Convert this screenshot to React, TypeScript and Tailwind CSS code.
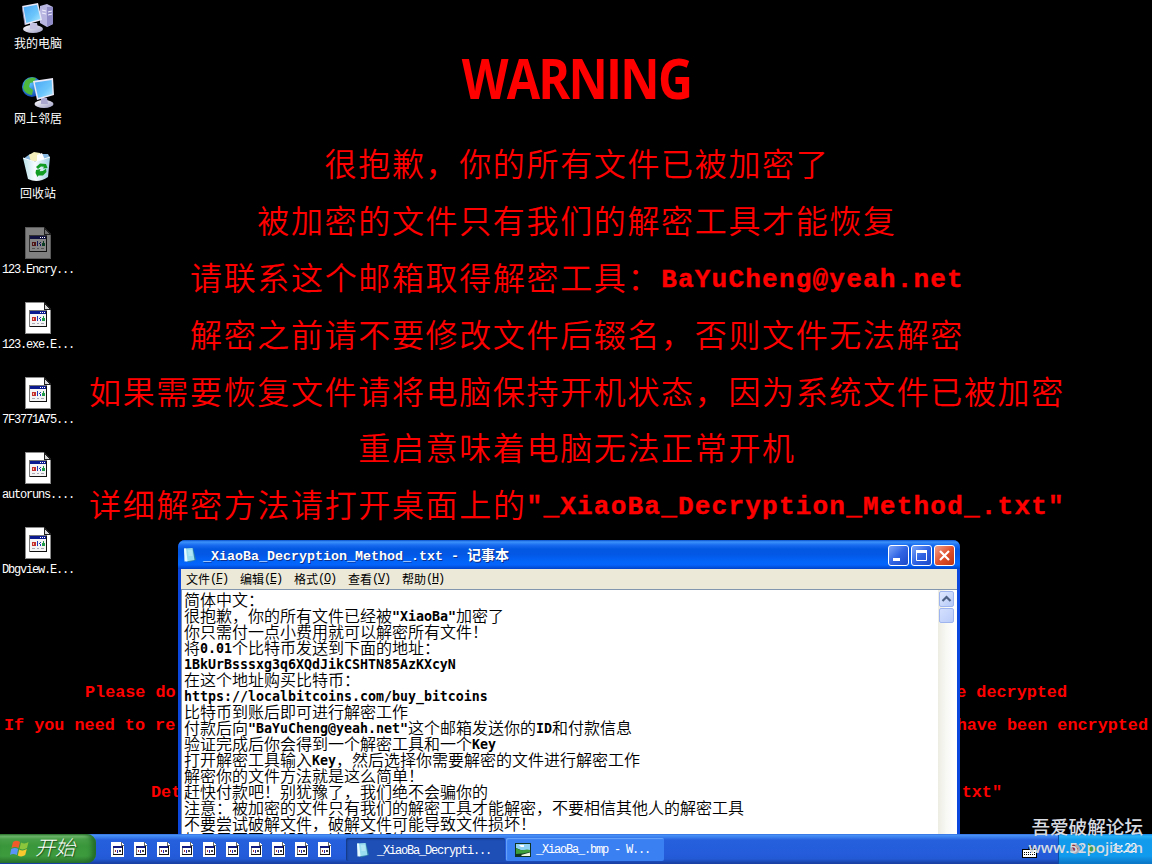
import React from "react";

const CJK = "font-['Noto_Sans_CJK_SC',sans-serif]";

function Mixed({ text, latin }: { text: string; latin: string }) {
  const parts = text.match(/[\x20-\x7e]+|[^\x20-\x7e]+/g) ?? [];
  return (
    <>
      {parts.map((p, i) =>
        /^[\x20-\x7e]/.test(p) ? (
          <span key={i} className={latin}>
            {p}
          </span>
        ) : (
          <span key={i}>{p}</span>
        )
      )}
    </>
  );
}

const SMALL = "font-['Liberation_Mono',monospace] text-[12px] tracking-[-1.2px]";

function Gradients() {
  return (
    <svg width="0" height="0" className="absolute">
      <defs>
        <linearGradient id="screen" x1="0" y1="0" x2="1" y2="1">
          <stop offset="0" stopColor="#4aa6f5" />
          <stop offset="0.6" stopColor="#6cc6fb" />
          <stop offset="1" stopColor="#b4ecff" />
        </linearGradient>
        <linearGradient id="metal" x1="0" y1="0" x2="1" y2="1">
          <stop offset="0" stopColor="#ffffff" />
          <stop offset="1" stopColor="#9c9cc4" />
        </linearGradient>
        <radialGradient id="globe" cx="0.4" cy="0.35" r="0.7">
          <stop offset="0" stopColor="#5cc4ff" />
          <stop offset="1" stopColor="#0a3fae" />
        </radialGradient>
        <linearGradient id="glass" x1="0" y1="0" x2="1" y2="0">
          <stop offset="0" stopColor="#b9e3ea" />
          <stop offset="0.45" stopColor="#f8fcff" />
          <stop offset="1" stopColor="#9fd0e4" />
        </linearGradient>
      </defs>
    </svg>
  );
}

function ComputerIcon() {
  return (
    <svg width="32" height="32" viewBox="0 0 32 32">
      <path d="M18 4 L25 2 L31 5 V22 L25 25 L18 21 Z" fill="#b9b6e2" />
      <path d="M25 5 L31 5 V22 L25 25 Z" fill="#8f8cc8" />
      <path d="M20 8 L24 9 M20 11 L24 12 M26 10 L30 9 M26 13 L30 12" stroke="#f3f2ff" strokeWidth="1" />
      <ellipse cx="11" cy="27" rx="10" ry="4" fill="url(#metal)" />
      <path d="M8 21 L15 21 L16 27 L8 27 Z" fill="#c3c1df" />
      <path d="M0 4 L16 1 L20 18 L3 23 Z" fill="#e9e9f8" />
      <path d="M1.500 5.300 L15 2.800 L18.500 17 L4.300 21 Z" fill="url(#screen)" />
      <path d="M0 4 L3 23" stroke="#8583a8" strokeWidth="0.8" />
    </svg>
  );
}

function NetworkIcon() {
  return (
    <svg width="32" height="32" viewBox="0 0 32 32">
      <circle cx="10" cy="10" r="10" fill="url(#globe)" />
      <path d="M3 4 Q8 -1 14 1 L12 5 L8 6 L7 10 L11 13 L10 18 Q3 17 1 11 Z" fill="#4db83c" />
      <path d="M15 3 L19 7 L17 11 L14 8 Z" fill="#7dd35c" />
      <ellipse cx="22" cy="27" rx="9.500" ry="4" fill="url(#metal)" />
      <path d="M19 21 L25 21 L26 27 L19 27 Z" fill="#aaa8ce" />
      <path d="M11 4 L31 1 L32 18 L15 23 Z" fill="#e9e9f8" />
      <path d="M12.800 5.500 L29.600 3 L30.500 17 L16.200 21 Z" fill="url(#screen)" />
    </svg>
  );
}

function RecycleIcon() {
  return (
    <svg width="32" height="32" viewBox="0 0 32 32">
      <path d="M1 7 L8 2 L26 2 L28 6 L15 10 Z" fill="#88b8e0" />
      <path d="M7 3 L12 0 L18 1 L21 8 L9 10 Z" fill="#f4efbb" />
      <path d="M15 3 L20 1 L23 8 L15 10 Z" fill="#fff" />
      <path d="M1 6 L13 10 L28 5 L26 25 Q16 32 6 27 Z" fill="url(#glass)" />
      <path d="M14 15 L18 11.500 L24 12 L25.500 16 L21 16.500 L22 14.800 L19 14.600 L16 17 Z" fill="#119c24" />
      <path d="M14 18 L18.500 17 L17.700 19.300 L20.800 19 L24 16.800 L24.500 20 L21 23.500 L16.500 23.500 L15.500 25 L13.500 21 Z" fill="#119c24" />
      <path d="M1 6 L13 10 L28 5" stroke="#f4fbff" strokeWidth="1" fill="none" />
    </svg>
  );
}

function ExeIcon({ dim = false }: { dim?: boolean }) {
  const paper = dim ? "#808080" : "#ffffff";
  return (
    <svg width="26" height="32" viewBox="0 0 26 32" shapeRendering="crispEdges">
      <path d="M0.5 0.5 H19 L25.5 7 V31.5 H0.5 Z" fill={paper} stroke={dim ? "#5a5a5a" : "#8a8a8a"} />
      <path d="M19 0.5 V7 H25.5 Z" fill={dim ? "#6b6b6b" : "#d6d6d6"} stroke="#202020" />
      <rect x="4.5" y="8.5" width="17" height="16" fill={dim ? "#868686" : "#f4f4f4"} stroke={dim ? "#333" : "#777"} />
      <rect x="5" y="9" width="16" height="3" fill={dim ? "#101040" : "#0b1b8f"} />
      <path d="M15 10.5h1M17 10.5h1M19 10.5h1" stroke="#fff" />
      <path d="M21.5 9 V24.5 H5" stroke="#111" fill="none" />
      <rect x="7" y="15" width="4" height="4" fill={dim ? "#501515" : "#c43030"} />
      <rect x="8" y="16" width="1" height="2" fill={dim ? "#868686" : "#f6c9a0"} />
      <path d="M12.500 14v5M14 16.500h1M15.500 15v1M15.500 17v2" stroke={dim ? "#15155a" : "#2436b8"} strokeWidth="1.500" fill="none" />
      <path d="M17 19v-3h1v-2h1v2h1v3z" fill={dim ? "#0b3c24" : "#1e9a4b"} />
      <path d="M7 21.500h3M12 21.500h2M16 21.500h3" stroke={dim ? "#555" : "#a9a9b5"} />
    </svg>
  );
}

function SmallExeIcon() {
  return (
    <svg width="13" height="15" viewBox="0 0 13 15" shapeRendering="crispEdges">
      <path d="M0 0 H10 L13 3 V15 H0 Z" fill="#fff" />
      <path d="M10 0 V3 H13" stroke="#666" fill="none" />
      <rect x="2.500" y="4.500" width="9" height="8" fill="#fff" stroke="#777" />
      <rect x="2" y="4" width="9" height="2" fill="#101a80" />
      <rect x="11" y="4" width="1" height="9" fill="#111" />
      <rect x="2" y="12" width="10" height="1" fill="#111" />
      <rect x="4" y="8" width="1" height="2" fill="#a33" />
      <rect x="6" y="8" width="1" height="3" fill="#22a" />
      <rect x="8" y="8" width="2" height="2" fill="#444" />
    </svg>
  );
}

function NoteIcon({ className }: { className?: string }) {
  return (
    <svg width="16" height="16" viewBox="0 0 16 16" className={className}>
      <path d="M3 2 L11 1 L14 13 L6 15.500 Z" fill="#2f7fa8" />
      <path d="M2 1.500 L10.500 1 L12.500 13 L4 14.500 Z" fill="#9adcf0" />
      <path d="M2 1.500 L4 1.400 L5.500 14.300 L2.500 14.500 Z" fill="#e6fbff" />
      <path d="M6 4h4M6.300 6h4M6.500 8h4" stroke="#c9f1fb" />
    </svg>
  );
}

const desktopIcons = [
  { label: "我的电脑", icon: <ComputerIcon /> },
  { label: "网上邻居", icon: <NetworkIcon /> },
  { label: "回收站", icon: <RecycleIcon /> },
  { label: "123.Encry...", icon: <ExeIcon dim /> },
  { label: "123.exe.E...", icon: <ExeIcon /> },
  { label: "7F3771A75...", icon: <ExeIcon /> },
  { label: "autoruns....", icon: <ExeIcon /> },
  { label: "Dbgview.E...", icon: <ExeIcon /> },
];

const messages = [
  "很抱歉，你的所有文件已被加密了",
  "被加密的文件只有我们的解密工具才能恢复",
  "请联系这个邮箱取得解密工具：BaYuCheng@yeah.net",
  "解密之前请不要修改文件后辍名，否则文件无法解密",
  "如果需要恢复文件请将电脑保持开机状态，因为系统文件已被加密",
  "重启意味着电脑无法正常开机",
  '详细解密方法请打开桌面上的"_XiaoBa_Decryption_Method_.txt"',
];

const note = [
  "简体中文：",
  '很抱歉，你的所有文件已经被"XiaoBa"加密了',
  "你只需付一点小费用就可以解密所有文件！",
  "将0.01个比特币发送到下面的地址：",
  "1BkUrBsssxg3q6XQdJikCSHTN85AzKXcyN",
  "在这个地址购买比特币：",
  "https://localbitcoins.com/buy_bitcoins",
  "比特币到账后即可进行解密工作",
  '付款后向"BaYuCheng@yeah.net"这个邮箱发送你的ID和付款信息',
  "验证完成后你会得到一个解密工具和一个Key",
  "打开解密工具输入Key，然后选择你需要解密的文件进行解密工作",
  "解密你的文件方法就是这么简单！",
  "赶快付款吧！别犹豫了，我们绝不会骗你的",
  "注意：被加密的文件只有我们的解密工具才能解密，不要相信其他人的解密工具",
  "不要尝试破解文件，破解文件可能导致文件损坏！",
  "如果需要更多帮助，请联系邮箱",
];

const menus = [
  ["文件", "F"],
  ["编辑", "E"],
  ["格式", "O"],
  ["查看", "V"],
  ["帮助", "H"],
];

function Wallpaper() {
  return (
    <div className="absolute inset-0 flex flex-col text-[#fe0000]">
      <div className="flex h-[134px] w-full items-start justify-center pt-[38px] font-['Open_Sans',sans-serif] text-[55px] leading-[80px] font-bold">
        <span className="inline-block scale-x-[0.88] tracking-[-2px]">WARNING</span>
      </div>
      <div className={`${CJK} flex flex-col text-[32px] font-[350] tracking-[1.65px]`}>
        {messages.map((m) => (
          <div key={m} className="flex h-[56.800px] items-center justify-center pl-[2px] leading-[56px] whitespace-pre">
            <Mixed
              text={m}
              latin="mt-[7px] font-['Liberation_Mono',monospace] text-[26px] font-bold tracking-[1.220px] [-webkit-text-stroke:0.4px_#fe0000]"
            />
          </div>
        ))}
      </div>
      <div className="mt-[144px] flex flex-col font-['Liberation_Mono',monospace] text-[16.800px] leading-[33.600px] font-bold whitespace-pre">
        <div className="flex justify-between pr-[85px] pl-[85px]">
          <span>Please do</span>
          <span>be decrypted</span>
        </div>
        <div className="flex justify-between pr-[4px] pl-[4px]">
          <span>If you need to re</span>
          <span>have been encrypted</span>
        </div>
        <div className="mt-[33.600px] flex justify-between pr-[150px] pl-[151px]">
          <span>Det</span>
          <span>txt"</span>
        </div>
      </div>
    </div>
  );
}

function CaptionButton({ close = false, children }: { close?: boolean; children: React.ReactNode }) {
  return (
    <div
      className={`flex h-[21px] w-[21px] items-center justify-center rounded-[3px] border border-white ${
        close
          ? "bg-linear-to-br from-[#f0a08a] via-[#e0512c] to-[#c03410]"
          : "bg-linear-to-br from-[#7ea5f8] via-[#3064e4] to-[#1c49c8]"
      }`}
    >
      <svg width="19" height="19" viewBox="0 0 19 19">
        {children}
      </svg>
    </div>
  );
}

function NotepadWindow() {
  return (
    <div className="absolute top-[540px] left-[178px] flex h-[294px] w-[782px] flex-col overflow-hidden rounded-t-[7px] bg-[#0b47dc]">
      <div className="flex h-[29px] shrink-0 items-center bg-[linear-gradient(to_bottom,#0a50cc_0px,#3b93fb_2px,#1a6cf0_5px,#0358e2_9px,#0357e4_14px,#0365fb_22px,#0463fa_25px,#0043c8_29px)] pt-[1px] pr-[5px] pl-[4px]">
        <NoteIcon />
        <div className={`${CJK} ml-[5px] flex-1 text-[14px] font-bold whitespace-pre text-white [text-shadow:1px_1px_0_#0a2f8c]`}>
          <Mixed
            text="_XiaoBa_Decryption_Method_.txt - 记事本"
            latin="font-['Liberation_Mono',monospace] text-[13.330px]"
          />
        </div>
        <div className="flex gap-[2px]">
          <CaptionButton>
            <rect x="4" y="12" width="7" height="3" fill="#fff" />
          </CaptionButton>
          <CaptionButton>
            <path d="M4.500 5V14.500H14.500V5" fill="none" stroke="#fff" />
            <rect x="4" y="4" width="11" height="3" fill="#fff" />
          </CaptionButton>
          <CaptionButton close>
            <path d="M5 5L14 14M14 5L5 14" stroke="#fff" strokeWidth="2.200" />
          </CaptionButton>
        </div>
      </div>
      <div className="mr-[3px] ml-[3px] flex min-h-0 flex-1 flex-col bg-white">
        <div className={`${CJK} flex h-[20px] shrink-0 items-center gap-[12px] bg-[#ece9d8] pl-[5px] text-[12px] text-black`}>
          {menus.map(([name, key]) => (
            <span key={key} className="flex w-[42px] items-center leading-[18px] whitespace-nowrap">
              {name}
              <span className={SMALL}>
                (<u>{key}</u>)
              </span>
            </span>
          ))}
        </div>
        <div className="flex min-h-0 flex-1 border-t border-l border-[#8296ad]">
          <div className={`${CJK} flex min-w-0 flex-1 flex-col overflow-hidden pt-[1px] pl-[2px] text-[16px] font-[350] text-black`}>
            {note.map((n) => (
              <div key={n} className="flex h-[16px] shrink-0 items-center leading-[16px] whitespace-pre">
                <Mixed
                  text={n}
                  latin="mt-[3px] font-['DejaVu_Sans_Mono',monospace] text-[13.290px] font-bold"
                />
              </div>
            ))}
          </div>
          <div className="mr-[2px] flex w-[17px] flex-col items-center bg-linear-to-r from-[#eeede3] via-[#f8f8f5] to-white pt-[1px]">
            <div className="flex h-[16px] w-[15px] items-center justify-center rounded-[2px] border border-[#9db4ee] bg-linear-to-br from-[#e0e9ff] to-[#b4c8f6]">
              <svg width="11" height="8" viewBox="0 0 11 8">
                <path d="M1.500 6L5.500 2L9.500 6" fill="none" stroke="#4d6185" strokeWidth="2.200" />
              </svg>
            </div>
            <div className="mt-[1px] h-[15px] w-[15px] rounded-[2px] border border-[#9db4ee] bg-linear-to-br from-[#d4e0ff] to-[#b9cbf8]" />
          </div>
        </div>
      </div>
    </div>
  );
}

function Taskbar() {
  return (
    <div className="absolute top-[834px] left-0 flex h-[30px] w-full bg-[linear-gradient(to_bottom,#2a62d8_0px,#4a94f8_1px,#3b80f0_3px,#2660dc_6px,#245cdb_20px,#2259d4_25px,#1941a5_29px)]">
      <div className={`${CJK} flex h-[29px] w-[96px] items-center rounded-r-[9px] bg-[linear-gradient(to_bottom,#2e7a30_0px,#7cc47a_2px,#48a048_5px,#3a963a_12px,#3d9b3e_22px,#2a752c_29px)] pl-[10px] text-[20px] font-light text-white italic shadow-[inset_-4px_0_5px_#236b28]`}>
        <svg width="20" height="19" viewBox="0 0 20 19">
          <path d="M3 3Q6.500 0.500 10 3L8.500 9Q5 7 1.500 9Z" fill="#f0592a" />
          <path d="M11 3.500Q15 5.500 18.500 3L17 9Q13 11.500 9.500 9.500Z" fill="#8cc63c" />
          <path d="M1.200 10Q5 8 8.200 10L6.800 16Q3 14 0 16Z" fill="#5a94f4" />
          <path d="M9.200 10.500Q13 12.500 16.800 10L15.200 16Q11.500 18.500 7.800 16.500Z" fill="#fbc82d" />
        </svg>
        <span className="-mt-[3px] ml-[5px] leading-[26px] [text-shadow:1px_1px_1px_#1c4f1e]">开始</span>
      </div>
      <div className="flex w-[250px] items-center gap-[10px] pl-[15px]">
        {Array.from({ length: 10 }, (_, i) => (
          <SmallExeIcon key={i} />
        ))}
      </div>
      <div className="mt-[4px] flex h-[23px] w-[159px] items-center rounded-[2px] bg-[#1e4fb6] pl-[9px] text-white shadow-[inset_1px_1px_2px_#123579]">
        <NoteIcon />
        <span className={`${SMALL} mt-[3px] ml-[6px]`}>_XiaoBa_Decrypti...</span>
      </div>
      <div className="mt-[4px] ml-[1px] flex h-[23px] w-[158px] items-center rounded-[2px] bg-[#3b80f2] pl-[9px] text-white shadow-[inset_1px_1px_1px_#6aa5fb]">
        <svg width="16" height="14" viewBox="0 0 16 14">
          <rect width="16" height="14" fill="#0f3422" />
          <path d="M1 1H15V7Q8 9 1 5Z" fill="#8fd0f5" />
          <path d="M4 2h5v2H6z" fill="#fff" />
          <path d="M1 5Q6 8 9 7T15 7V9Q8 11 1 11Z" fill="#3c9f3a" />
          <path d="M6 12L15 9.500V13H7Z" fill="#eef6df" />
        </svg>
        <span className={`${SMALL} ml-[5px] whitespace-pre`}>_XiaoBa_.bmp - W...</span>
      </div>
      <div className="flex flex-1 items-center justify-end pt-[5px] pr-[21px]">
        <svg width="15" height="12" viewBox="0 0 15 12">
          <path d="M7 4V1H10" stroke="#000" fill="none" />
          <rect x="0.500" y="3.500" width="14" height="8" fill="#fff" stroke="#000" />
          <path d="M2 6.500H13M2 8.500H13" stroke="#000" strokeDasharray="1 1" />
        </svg>
      </div>
      <div className="flex w-[94px] items-center bg-[linear-gradient(to_bottom,#1480dc_0px,#28b4f8_2px,#129bec_6px,#119bee_22px,#0c78c8_29px)] pl-[10px] text-white shadow-[inset_1px_0_0_#0b4fa8]">
        <svg width="32" height="16" viewBox="0 0 32 16">
          <circle cx="7" cy="8" r="5" fill="#a9a9b8" />
          <path d="M3 4L6 3L10 8L6 10Z" fill="#8c2f3a" />
          <path d="M13 4Q17 8 13 12" stroke="#c5cdd8" fill="none" />
          <path d="M20 2L31 8L20 14Z" fill="#3f9c4a" />
        </svg>
        <span className={`${SMALL} ml-[12px]`}>1:22</span>
      </div>
    </div>
  );
}

export default function App() {
  return (
    <div className="relative h-[864px] w-[1152px] overflow-hidden bg-black">
      <Gradients />
      <Wallpaper />
      <div className="absolute top-[2px] left-0 flex w-[76px] flex-col">
        {desktopIcons.map((d) => (
          <div key={d.label} className={`${CJK} flex h-[75px] flex-col items-center text-[12px] text-white`}>
            <div className="flex h-[32px] items-center">{d.icon}</div>
            <div className="leading-[18px] whitespace-nowrap">
              <Mixed text={d.label} latin={SMALL} />
            </div>
          </div>
        ))}
      </div>
      <NotepadWindow />
      <Taskbar />
      <div className={`${CJK} absolute top-[813px] right-[9px] flex flex-col items-end text-[#d8dce2]`}>
        <span className="text-[18.600px] leading-[26px] font-medium">吾爱破解论坛</span>
        <span className="-mt-[1px] font-['Open_Sans',sans-serif] text-[15px] leading-[18px] font-semibold">www.52pojie.cn</span>
      </div>
    </div>
  );
}
